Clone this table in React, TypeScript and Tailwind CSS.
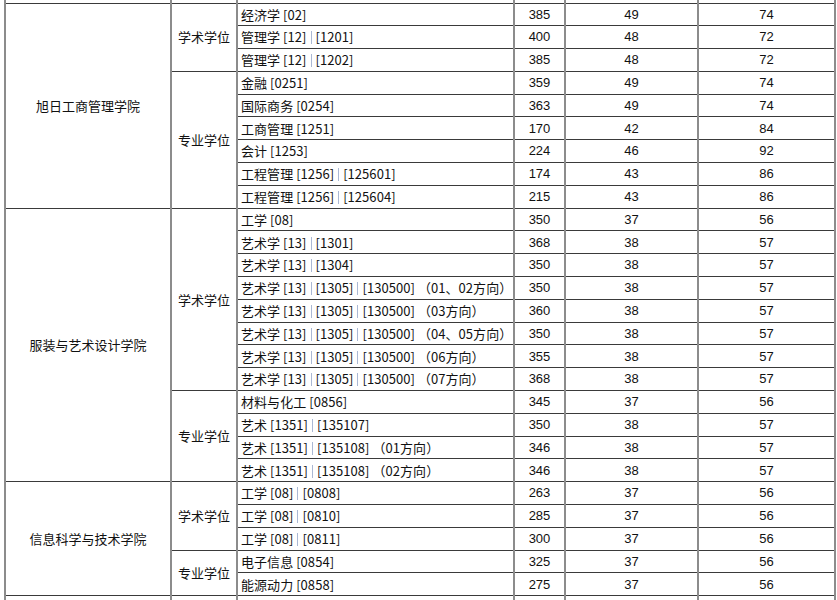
import React from 'react';

type Row = { major: React.ReactNode; total: string; a: string; b: string };
type Track = { name: string; rows: Row[] };
type Group = { school: string; tracks: Track[] };

const Bar = () => (
  <span className="inline-block w-px h-[13px] align-[-2px] mx-[4px] bg-[#aab8d4]" />
);

const m = (...parts: string[]) => (
  <>
    {parts.map((p, i) => (
      <React.Fragment key={i}>
        {i > 0 && <Bar />}
        {p}
      </React.Fragment>
    ))}
  </>
);

const groups: Group[] = [
  {
    school: '旭日工商管理学院',
    tracks: [
      {
        name: '学术学位',
        rows: [
          { major: m('经济学 [02]'), total: '385', a: '49', b: '74' },
          { major: m('管理学 [12]', '[1201]'), total: '400', a: '48', b: '72' },
          { major: m('管理学 [12]', '[1202]'), total: '385', a: '48', b: '72' },
        ],
      },
      {
        name: '专业学位',
        rows: [
          { major: m('金融 [0251]'), total: '359', a: '49', b: '74' },
          { major: m('国际商务 [0254]'), total: '363', a: '49', b: '74' },
          { major: m('工商管理 [1251]'), total: '170', a: '42', b: '84' },
          { major: m('会计 [1253]'), total: '224', a: '46', b: '92' },
          { major: m('工程管理 [1256]', '[125601]'), total: '174', a: '43', b: '86' },
          { major: m('工程管理 [1256]', '[125604]'), total: '215', a: '43', b: '86' },
        ],
      },
    ],
  },
  {
    school: '服装与艺术设计学院',
    tracks: [
      {
        name: '学术学位',
        rows: [
          { major: m('工学 [08]'), total: '350', a: '37', b: '56' },
          { major: m('艺术学 [13]', '[1301]'), total: '368', a: '38', b: '57' },
          { major: m('艺术学 [13]', '[1304]'), total: '350', a: '38', b: '57' },
          { major: m('艺术学 [13]', '[1305]', '[130500] （01、02方向）'), total: '350', a: '38', b: '57' },
          { major: m('艺术学 [13]', '[1305]', '[130500] （03方向）'), total: '360', a: '38', b: '57' },
          { major: m('艺术学 [13]', '[1305]', '[130500] （04、05方向）'), total: '350', a: '38', b: '57' },
          { major: m('艺术学 [13]', '[1305]', '[130500] （06方向）'), total: '355', a: '38', b: '57' },
          { major: m('艺术学 [13]', '[1305]', '[130500] （07方向）'), total: '368', a: '38', b: '57' },
        ],
      },
      {
        name: '专业学位',
        rows: [
          { major: m('材料与化工 [0856]'), total: '345', a: '37', b: '56' },
          { major: m('艺术 [1351]', '[135107]'), total: '350', a: '38', b: '57' },
          { major: m('艺术 [1351]', '[135108] （01方向）'), total: '346', a: '38', b: '57' },
          { major: m('艺术 [1351]', '[135108] （02方向）'), total: '346', a: '38', b: '57' },
        ],
      },
    ],
  },
  {
    school: '信息科学与技术学院',
    tracks: [
      {
        name: '学术学位',
        rows: [
          { major: m('工学 [08]', '[0808]'), total: '263', a: '37', b: '56' },
          { major: m('工学 [08]', '[0810]'), total: '285', a: '37', b: '56' },
          { major: m('工学 [08]', '[0811]'), total: '300', a: '37', b: '56' },
        ],
      },
      {
        name: '专业学位',
        rows: [
          { major: m('电子信息 [0854]'), total: '325', a: '37', b: '56' },
          { major: m('能源动力 [0858]'), total: '275', a: '37', b: '56' },
        ],
      },
    ],
  },
];

const cell = 'border-y border-y-[#3a3a3a] border-x-2 border-x-[#8c8c8c] p-0';
const num = `${cell} text-center text-[13px] font-['Liberation_Sans',sans-serif]`;

export default function App() {
  return (
    <div className="bg-white w-[837px] h-[600px] overflow-hidden pl-[4px] font-['Noto_Sans_CJK_SC',sans-serif] text-[#111]">
      <table className="border-collapse table-fixed w-[830px]">
        <colgroup>
          <col className="w-[166px]" />
          <col className="w-[66px]" />
          <col className="w-[277px]" />
          <col className="w-[51px]" />
          <col className="w-[133px]" />
          <col className="w-[137px]" />
        </colgroup>
        <tbody>
          <tr className="h-[3px]">
            {[0, 1, 2, 3, 4, 5].map((i) => (
              <td key={i} className="border-x-2 border-x-[#8c8c8c] p-0" />
            ))}
          </tr>
          {groups.map((g) => {
            const total = g.tracks.reduce((s, t) => s + t.rows.length, 0);
            return g.tracks.map((t, ti) =>
              t.rows.map((r, ri) => (
                <tr key={`${g.school}-${ti}-${ri}`} className="h-[22.8px]">
                  {ti === 0 && ri === 0 && (
                    <td rowSpan={total} className={`${cell} text-center text-[13px]`}>
                      {g.school}
                    </td>
                  )}
                  {ri === 0 && (
                    <td rowSpan={t.rows.length} className={`${cell} text-center text-[13px]`}>
                      {t.name}
                    </td>
                  )}
                  <td className={`${cell} pl-[3px] text-[13px] whitespace-nowrap tracking-[0.05px]`}>
                    {r.major}
                  </td>
                  <td className={num}>{r.total}</td>
                  <td className={num}>{r.a}</td>
                  <td className={num}>{r.b}</td>
                </tr>
              ))
            );
          })}
          <tr className="h-[22.8px]">
            {[0, 1, 2, 3, 4, 5].map((i) => (
              <td key={i} className={cell} />
            ))}
          </tr>
        </tbody>
      </table>
    </div>
  );
}
